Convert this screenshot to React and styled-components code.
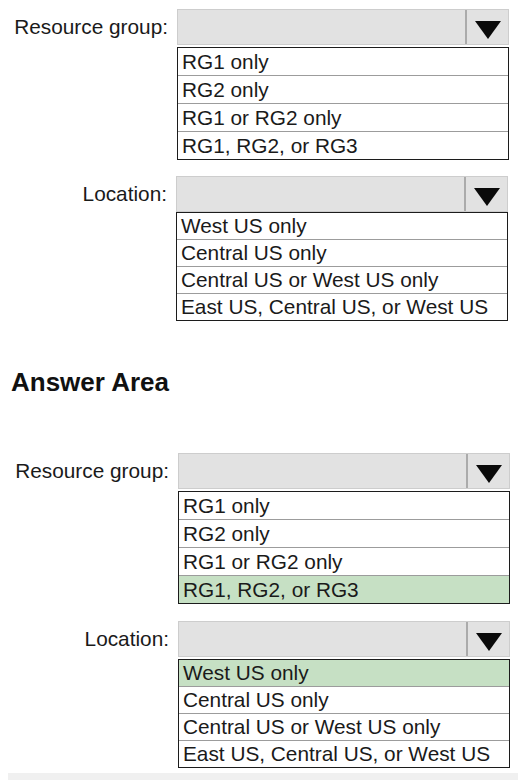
import React from "react";
import styled, { createGlobalStyle } from "styled-components";

const Global = createGlobalStyle`
  html, body { margin: 0; padding: 0; background: #ffffff; }
  body { font-family: "Liberation Sans", Arial, sans-serif; color: #151515; }
`;

const Page = styled.div`
  width: 526px;
  height: 780px;
  overflow: hidden;
  padding-top: 9px;
  box-sizing: border-box;
  display: flex;
  flex-direction: column;
`;

const Block = styled.div`
  display: grid;
  grid-template-columns: ${(p) => p.$labelWidth || 168}px 332px;
  column-gap: ${(p) => p.$gap || 9}px;
  margin-top: ${(p) => p.$top || 0}px;
  align-items: start;
`;

const Label = styled.div`
  text-align: right;
  font-size: 20.8px;
  line-height: 36px;
  height: 36px;
  color: #1a1a1a;
`;

const Column = styled.div`
  display: flex;
  flex-direction: column;
  gap: ${(p) => p.$gap || 0}px;
`;

const Select = styled.div`
  display: flex;
  height: 36px;
  box-sizing: border-box;
  background: #e2e2e2;
  border: 1px solid #cdcdcd;
`;

const Field = styled.div`
  flex: 1;
`;

const ArrowButton = styled.div`
  width: 43px;
  border-left: 2px solid #ababab;
  display: flex;
  align-items: center;
  justify-content: center;
  padding-top: 5px;
  box-sizing: border-box;
`;

const List = styled.div`
  border: 1px solid #1c1c1c;
  display: flex;
  flex-direction: column;
  background: #fff;
`;

const Item = styled.div`
  height: ${(p) => p.$h}px;
  line-height: ${(p) => p.$h}px;
  font-size: 20.8px;
  padding-left: 4px;
  color: #1a1a1a;
  white-space: nowrap;
  background: ${(p) => (p.$selected ? "#c6e0c4" : "#ffffff")};
  & + & {
    border-top: 1px solid #9c9c9c;
  }
`;

const Heading = styled.h2`
  margin: 46px 0 0 11px;
  font-size: 26px;
  line-height: 30px;
  font-weight: 700;
  color: #111;
`;

const Footer = styled.div`
  margin: 5px 8px 0 8px;
  height: 10px;
  width: 510px;
  background: #f0f0f0;
`;

function Arrow() {
  return (
    <svg width="26" height="18" viewBox="0 0 26 18">
      <polygon points="0,0 26,0 13,18" fill="#0a0a0a" />
    </svg>
  );
}

function Dropdown({ label, options, selected, top, listGap, labelWidth, gap, rowHeight = 26 }) {
  return (
    <Block $top={top} $labelWidth={labelWidth} $gap={gap}>
      <Label>{label}</Label>
      <Column $gap={listGap}>
        <Select>
          <Field />
          <ArrowButton>
            <Arrow />
          </ArrowButton>
        </Select>
        <List>
          {options.map((o) => (
            <Item key={o} $h={rowHeight} $selected={o === selected}>
              {o}
            </Item>
          ))}
        </List>
      </Column>
    </Block>
  );
}

const rg = ["RG1 only", "RG2 only", "RG1 or RG2 only", "RG1, RG2, or RG3"];
const loc = [
  "West US only",
  "Central US only",
  "Central US or West US only",
  "East US, Central US, or West US",
];

export default function App() {
  return (
    <>
      <Global />
      <Page>
        <Dropdown label="Resource group:" options={rg} listGap={2} rowHeight={27} />
        <Dropdown label="Location:" options={loc} top={16} labelWidth={167} rowHeight={26} />
        <Heading>Answer Area</Heading>
        <Dropdown label="Resource group:" options={rg} selected="RG1, RG2, or RG3" top={56} listGap={2} labelWidth={169} rowHeight={27} />
        <Dropdown label="Location:" options={loc} selected="West US only" top={17} labelWidth={169} listGap={2} rowHeight={26} />
        <Footer />
      </Page>
    </>
  );
}
